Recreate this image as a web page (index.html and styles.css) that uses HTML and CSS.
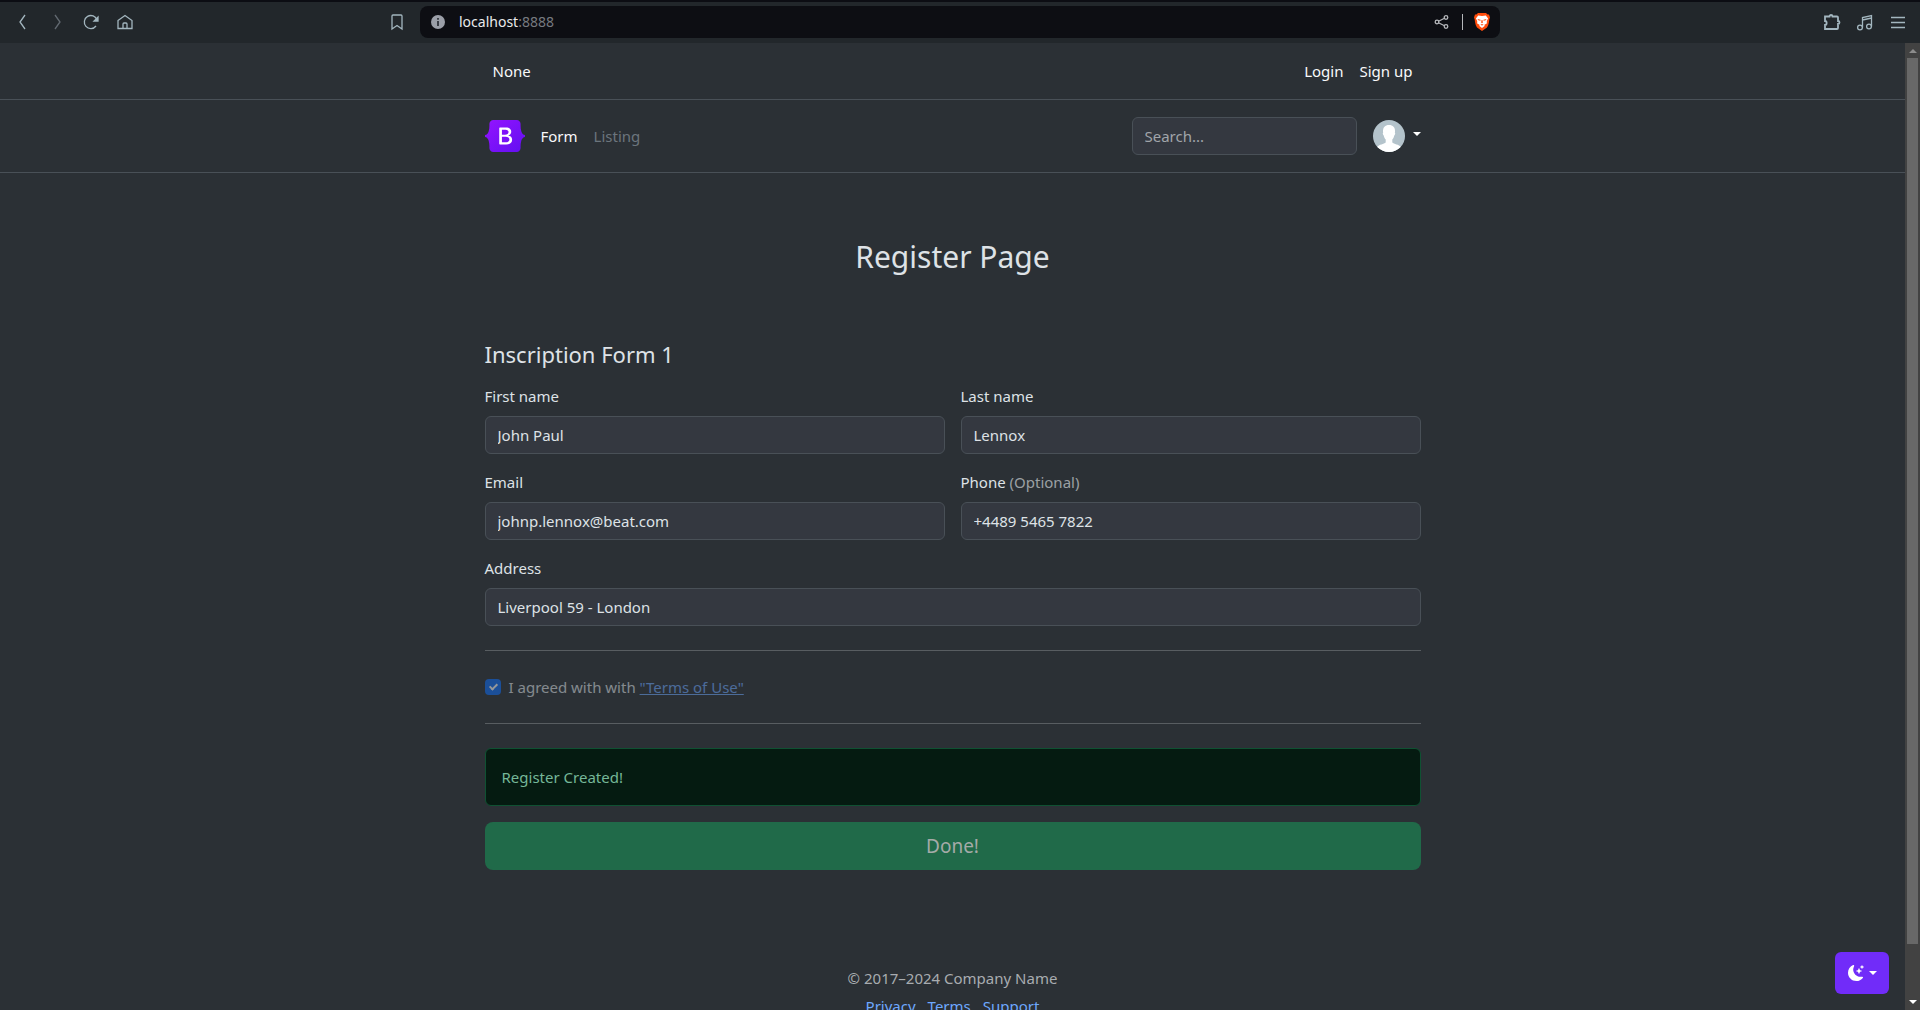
FILE: index.html
```html
<!DOCTYPE html>
<html lang="en">
<head>
<meta charset="utf-8">
<title>Register Page</title>
<link rel="stylesheet" href="styles.css">
</head>
<body>
<div class="toolbar">
  <div class="tools">
    <button class="tool" aria-label="Back"><svg width="20" height="20" viewBox="0 0 20 20"><path d="M12 3 7 10l5 7"/></svg></button>
    <button class="tool tool-off" aria-label="Forward"><svg width="20" height="20" viewBox="0 0 20 20"><path d="m8 3 5 7-5 7"/></svg></button>
    <button class="tool" aria-label="Reload"><svg width="20" height="20" viewBox="0 0 20 20"><path d="M16 8a6.500 6.500 0 1 0-1 6"/><path d="M17 5v4h-4z" fill="currentColor"/></svg></button>
    <button class="tool" aria-label="Home"><svg width="20" height="20" viewBox="0 0 20 20"><path d="M3 8.500 10 3.500l7 5V16.500H3zM8 16.500v-4.500q0-1 1-1h2q1 0 1 1v4.500"/></svg></button>
  </div>
  <button class="tool bookmark" aria-label="Bookmark"><svg width="20" height="20" viewBox="0 0 20 20"><path d="M5 4q0-1 1-1h8q1 0 1 1v13l-5-3.500L5 17z"/></svg></button>
  <div class="address">
    <svg width="14" height="14" viewBox="0 0 14 14"><circle cx="7" cy="7" r="7" fill="#9b9fa8"/><path d="M7 3v1.700M7 6v5" stroke="#30343b" stroke-width="1.800"/></svg>
    <span class="url">localhost<span class="port">:8888</span></span>
    <button class="tool share" aria-label="Share"><svg width="20" height="20" viewBox="0 0 20 20"><path d="m5 10 9-4.500M5 10l9 4.500"/><g fill="#0d0e13"><circle cx="5" cy="10" r="1.800"/><circle cx="14" cy="5.500" r="1.800"/><circle cx="14" cy="14.500" r="1.800"/></g></svg></button>
    <span class="divider"></span>
    <button class="tool" aria-label="Brave Shields"><svg class="brave" width="16" height="18" viewBox="0 0 16 18"><path d="M4 0h8l1.600 1.500 1.400 0 1 3-.7 2L15 9q-.6 4-2 5.500L8 18l-5-3.500Q1.600 13 1 9L.7 6.500 0 4.500l1-3h1.400z" fill="#ff4d0c"/><path d="M4.200 2.500 8 3l3.800-.5 2.300 3-1.300 2.500v2.400l-2.300 1.300.1 1.300L8 15l-2.600-2 .1-1.300-2.300-1.300V8L1.900 5.500z" fill="#fff"/><path d="m3.500 6 3 .8v1L4.200 7.300zM12.500 6l-3 .8v1l2.300-.5zM7.600 7h.8l.5 2.600-.9.600-.9-.6zM6.300 11.700l1.700-.7 1.700.7-1.700.7z" fill="#ff4d0c"/></svg></button>
  </div>
  <div class="tools tools-end">
    <button class="tool" aria-label="Extensions"><svg width="20" height="20" viewBox="0 0 20 20"><path class="heavy" d="M3 4.500h4.500a1.500 1.500 0 0 1 3 0H15q1 0 1 1V9a1.500 1.500 0 0 1 0 3v4q0 1-1 1H3v-4c2.200 0 2.200-4 0-4z"/></svg></button>
    <button class="tool" aria-label="Media"><svg width="20" height="20" viewBox="0 0 20 20"><path d="M7.500 15.500V5.500l9-2v11M7.500 8l9-2"/><circle cx="5" cy="15.500" r="2.400"/><circle cx="14" cy="14.500" r="2.400"/></svg></button>
    <button class="tool" aria-label="Menu"><svg width="20" height="20" viewBox="0 0 20 20"><path d="M3 5.500h14M3 10.500h14M3 15.500h14"/></svg></button>
  </div>
</div>
<div class="viewport">
  <div class="page">
    <nav class="bar">
      <div class="container bar-account">
        <a href="#" class="nav-link">None</a>
        <div class="links"><a href="#" class="nav-link">Login</a><a href="#" class="nav-link">Sign up</a></div>
      </div>
    </nav>
    <header class="bar">
      <div class="container bar-main">
        <a href="#" class="brand" aria-label="Bootstrap"><svg width="40" height="32" viewBox="0 0 118 94"><defs><linearGradient id="brand" x1="20" y1="0" x2="98" y2="94" gradientUnits="userSpaceOnUse"><stop stop-color="#9013fe"/><stop offset="1" stop-color="#6610f2"/></linearGradient></defs><path fill="url(#brand)" fill-rule="evenodd" d="M24.509 0c-6.733 0-11.715 5.893-11.492 12.284.214 6.140-.064 14.092-2.066 20.577C8.943 39.365 5.547 43.485 0 44.014v5.972c5.547.529 8.943 4.649 10.951 11.153 2.002 6.485 2.280 14.437 2.066 20.577C12.794 88.106 17.776 94 24.510 94H93.500c6.733 0 11.714-5.893 11.491-12.284-.214-6.140.064-14.092 2.066-20.577 2.009-6.504 5.396-10.624 10.943-11.153v-5.972c-5.547-.529-8.934-4.649-10.943-11.153-2.002-6.484-2.280-14.437-2.066-20.577C105.214 5.894 100.233 0 93.500 0H24.508z"/><path fill="#fff" fill-rule="evenodd" d="M80 57.863C80 66.663 73.436 72 62.543 72H44a2 2 0 0 1-2-2V24a2 2 0 0 1 2-2h18.437c9.083 0 15.044 4.920 15.044 12.474 0 5.302-4.010 10.049-9.119 10.880v.277C75.317 46.394 80 51.210 80 57.863zM60.521 28.340H49.948v14.934h8.905c6.884 0 10.680-2.772 10.680-7.727 0-4.643-3.264-7.207-9.012-7.207zM49.948 49.200v16.458H60.910c7.167 0 10.964-2.876 10.964-8.281 0-5.406-3.903-8.178-11.425-8.178H49.948z"/></svg></a>
        <div class="links main-links"><a href="#" class="nav-link">Form</a><a href="#" class="nav-link nav-muted">Listing</a></div>
        <input class="control search" type="search" placeholder="Search..." aria-label="Search">
        <button class="user" aria-label="Account"><svg width="32" height="32" viewBox="0 0 32 32"><defs><clipPath id="round"><circle cx="16" cy="16" r="16"/></clipPath></defs><g clip-path="url(#round)"><path fill="#b4c3cb" d="M0 0h32v32H0z"/><path fill="#fff" d="M16 5c4 0 6 2.500 6 6 0 .5 0 1-.2 1.500.8.300.3 2.500-.5 3-.3 1.500-1 3-2 4v3c1.500 1.500 6.700 2 8.700 4.500V32H4v-5c2-2.500 7.200-3 8.700-4.500v-3c-1-1-1.700-2.500-2-4-.8-.5-1.300-2.700-.5-3-.2-.5-.2-1-.2-1.500 0-3.500 2-6 6-6z"/></g></svg><span class="caret"></span></button>
      </div>
    </header>
    <main class="container">
      <h1>Register Page</h1>
      <form>
        <h2>Inscription Form 1</h2>
        <div class="fields">
          <div class="field"><label for="first">First name</label><input class="control" id="first" type="text" value="John Paul"></div>
          <div class="field"><label for="last">Last name</label><input class="control" id="last" type="text" value="Lennox"></div>
          <div class="field"><label for="email">Email</label><input class="control" id="email" type="email" value="johnp.lennox@beat.com"></div>
          <div class="field"><label for="phone">Phone <span class="muted">(Optional)</span></label><input class="control" id="phone" type="tel" value="+4489 5465 7822"></div>
          <div class="field wide"><label for="street">Address</label><input class="control" id="street" type="text" value="Liverpool 59 - London"></div>
        </div>
        <hr>
        <div class="check"><input type="checkbox" id="terms" checked disabled><label for="terms">I agreed with with <a href="#">"Terms of Use"</a></label></div>
        <hr>
        <div class="alert" role="alert">Register Created!</div>
        <button class="submit" type="submit" disabled>Done!</button>
      </form>
    </main>
    <footer>
      <p>© 2017–2024 Company Name</p>
      <div class="footer-links"><a href="#">Privacy</a><a href="#">Terms</a><a href="#">Support</a></div>
    </footer>
  </div>
  <div class="scrollbar"><span class="arrow arrow-up"></span><span class="thumb"></span><span class="arrow"></span></div>
  <button class="theme" aria-label="Toggle theme"><svg width="16" height="16" viewBox="0 0 16 16" fill="currentColor"><path d="M6 .278a.768.768 0 0 1 .08.858 7.208 7.208 0 0 0-.878 3.460c0 4.021 3.278 7.277 7.318 7.277.527 0 1.040-.055 1.533-.160a.787.787 0 0 1 .810.316.733.733 0 0 1-.031.893A8.349 8.349 0 0 1 8.344 16C3.734 16 0 12.286 0 7.710 0 4.266 2.114 1.312 5.124.060A.752.752 0 0 1 6 .278z"/><path d="M10.794 3.148a.217.217 0 0 1 .412 0l.387 1.162c.173.518.579.924 1.097 1.097l1.162.387a.217.217 0 0 1 0 .412l-1.162.387a1.734 1.734 0 0 0-1.097 1.097l-.387 1.162a.217.217 0 0 1-.412 0l-.387-1.162A1.734 1.734 0 0 0 9.310 6.593l-1.162-.387a.217.217 0 0 1 0-.412l1.162-.387a1.734 1.734 0 0 0 1.097-1.097l.387-1.162zM13.863.099a.145.145 0 0 1 .274 0l.258.774c.115.346.386.617.732.732l.774.258a.145.145 0 0 1 0 .274l-.774.258a1.156 1.156 0 0 0-.732.732l-.258.774a.145.145 0 0 1-.274 0l-.258-.774a1.156 1.156 0 0 0-.732-.732l-.774-.258a.145.145 0 0 1 0-.274l.774-.258c.346-.115.617-.386.732-.732L13.863.1z"/></svg><span class="caret"></span></button>
</div>
</body>
</html>
```
FILE: styles.css
```css
*, *::before, *::after { box-sizing: border-box; }
body {
  margin: 0;
  height: 100vh;
  display: flex;
  flex-direction: column;
  overflow: hidden;
  background: #2b3035;
  color: #dee2e6;
  font: 15px/24px "Noto Sans", sans-serif;
}
button, input { font: inherit; }
button { border: 0; background: none; padding: 0; color: inherit; cursor: pointer; }

/* Browser toolbar */
.toolbar {
  display: grid;
  grid-template-columns: minmax(0, 1fr) minmax(0, 1080px) minmax(0, 1fr);
  align-items: center;
  height: 43px;
  flex: none;
  padding-bottom: 1px;
  border-top: 2px solid #0c0d13;
  background: #22272b;
}
.tools { display: flex; grid-area: 1 / 1; gap: 14px; padding-left: 13px; }
.tools-end { grid-area: 1 / 3; justify-content: flex-end; gap: 13px; padding: 0 12px 0 0; }
.tool { display: grid; place-items: center; min-width: 20px; height: 20px; color: #a3b6bf; }
.tool svg:not(.brave) { fill: none; stroke: currentColor; stroke-width: 1.3; }
.tool .heavy { stroke-width: 1.8; }
.tool-off { color: #626970; }
.bookmark { grid-area: 1 / 1; justify-self: end; margin-right: 13px; }
.address {
  display: flex;
  align-items: center;
  height: 32px;
  padding: 0 8px 0 11px;
  border-radius: 8px;
  background: #0d0e13;
  color: #e9eaec;
  font-size: 14px;
}
.url { flex: 1; margin-left: 14px; }
.port { color: #777a80; }
.share { color: #b5b7bb; }
.divider { width: 1px; height: 16px; margin: 0 9px 0 10px; background: #b5b7bb; }

/* Page frame */
.viewport { position: relative; display: flex; flex: 1; min-height: 0; }
.page { flex: 1; overflow-y: auto; scrollbar-width: none; }
.container { width: 100%; max-width: 960px; margin: 0 auto; padding: 0 12px; }
.bar { border-bottom: 1px solid #495057; }
.bar-account { display: flex; justify-content: space-between; padding-top: 8px; padding-bottom: 8px; }
.links { display: flex; }
.nav-link { padding: 8px; color: #f8f9fa; text-decoration: none; }
.nav-muted { color: #6c757d; }
.bar-main { display: flex; align-items: center; height: 72px; }
.brand { display: flex; }
.main-links { flex: 1; margin-left: 8px; }
.control {
  display: block;
  width: 100%;
  height: 38px;
  padding: 6px 12px;
  border: 1px solid #495057;
  border-radius: 6px;
  outline: 0;
  background: #343840;
  color: #dee2e6;
}
.control::placeholder { color: #a1a5aa; opacity: 1; }
.search { width: 225px; margin-right: 16px; }
.user { display: flex; align-items: center; gap: 8px; }
.caret { border: 4px solid transparent; border-top-color: #fff; border-bottom: 0; }
.user .caret { margin-bottom: 4px; }

/* Form */
h1, h2 { margin: 0; font-weight: 400; }
h1 { padding: 64px 0 63px; font-size: 30px; line-height: 40px; text-align: center; }
h2 { margin-bottom: 16px; font-size: 22px; line-height: 28px; }
.fields { display: grid; grid-template-columns: 1fr 1fr; gap: 16px; }
.field label { display: block; margin-bottom: 8px; }
.wide { grid-column: 1 / -1; }
.muted { color: #9ca0a4; }
hr { margin: 24px 0; border: 0; border-top: 1px solid #585d61; }
.check { display: flex; align-items: center; gap: 8px; opacity: .5; }
.check input { position: relative; appearance: none; width: 16px; height: 16px; margin: 0; border-radius: 4px; background: #0d6efd; }
.check input::after { content: ""; position: absolute; left: 6px; top: 3px; width: 5px; height: 8px; border: solid #fff; border-width: 0 2px 2px 0; transform: rotate(45deg); }
a { color: #6ea8fe; }
.alert { margin-bottom: 16px; padding: 16px; border: 1px solid #0f5132; border-radius: 6px; background: #051b11; color: #75b798; }
.submit { display: block; width: 100%; padding: 12px; border-radius: 8px; background: #206a49; color: #a5aaa8; font-size: 19px; line-height: 24px; }
footer { padding: 96px 0 48px; color: #a8acb0; text-align: center; }
footer p { margin: 0 0 4px; }
.footer-links { display: flex; justify-content: center; gap: 12px; }
.footer-links a { text-decoration: none; }

/* Scrollbar and theme switch */
.scrollbar { display: flex; flex-direction: column; align-items: center; width: 15px; background: #424242; }
.thumb { flex: 1; width: 11px; margin: 0 0 51px; background: #686868; }
.arrow { margin: 5px 0 6px; border: 4px solid transparent; border-top-color: #fff; border-bottom: 0; }
.arrow-up { margin: 6px 0 5px; border-top: 0; border-bottom: 4px solid #8c8c8c; }
.theme { position: absolute; right: 31px; bottom: 16px; display: flex; align-items: center; justify-content: center; gap: 5px; width: 54px; height: 42px; border-radius: 6px; background: #712cf9; color: #fff; }
```
